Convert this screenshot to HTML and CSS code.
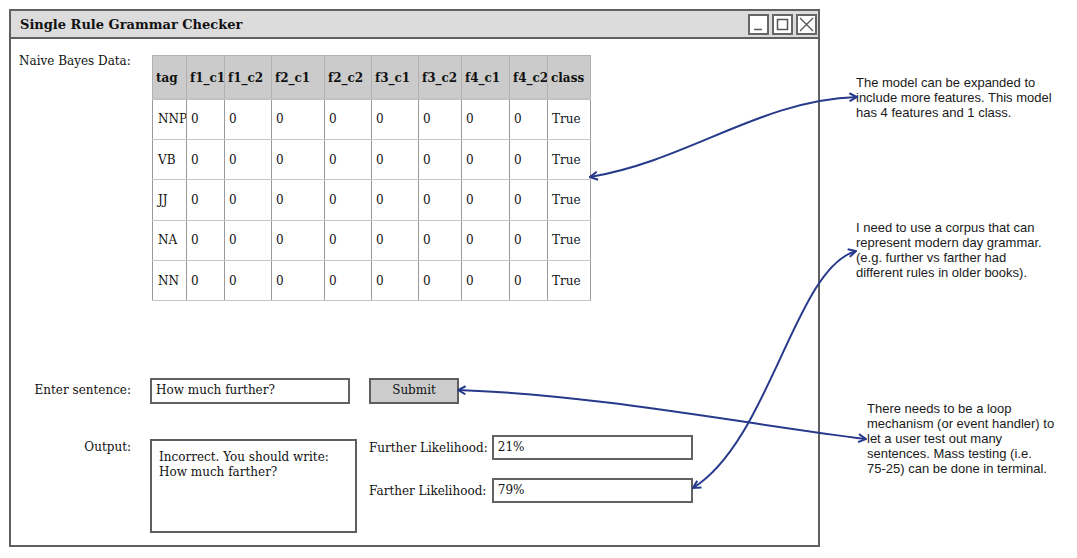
FILE: index.html
```html
<!DOCTYPE html>
<html>
<head>
<meta charset="utf-8">
<link rel="stylesheet" href="styles.css">
</head>
<body>
<div class="page">
  <div class="window">
    <div class="titlebar">
      <span class="title">Single Rule Grammar Checker</span>
      <div class="winbtns">
        <span class="winbtn"><svg width="17" height="17" viewBox="0 0 17 17"><path d="M4,13.5 H12" stroke="#555" stroke-width="1.5"/></svg></span>
        <span class="winbtn"><svg width="17" height="17" viewBox="0 0 17 17"><rect x="3.5" y="3.5" width="10" height="10" fill="none" stroke="#555" stroke-width="1.5"/></svg></span>
        <span class="winbtn"><svg width="17" height="17" viewBox="0 0 17 17"><path d="M2,2 L15,15 M15,2 L2,15" stroke="#555" stroke-width="1.3"/></svg></span>
      </div>
    </div>
    <div class="winbody">
      <div class="datarow">
        <div class="datalabel">Naive Bayes Data:</div>
        <table class="grid">
          <colgroup>
            <col style="width:34px"><col style="width:38px"><col style="width:47px"><col style="width:53px"><col style="width:47px"><col style="width:47px"><col style="width:43px"><col style="width:48px"><col style="width:38px"><col style="width:43px">
          </colgroup>
          <thead>
            <tr><th>tag</th><th>f1_c1</th><th>f1_c2</th><th>f2_c1</th><th>f2_c2</th><th>f3_c1</th><th>f3_c2</th><th>f4_c1</th><th>f4_c2</th><th>class</th></tr>
          </thead>
          <tbody>
            <tr><td>NNP</td><td>0</td><td>0</td><td>0</td><td>0</td><td>0</td><td>0</td><td>0</td><td>0</td><td>True</td></tr>
            <tr><td>VB</td><td>0</td><td>0</td><td>0</td><td>0</td><td>0</td><td>0</td><td>0</td><td>0</td><td>True</td></tr>
            <tr><td>JJ</td><td>0</td><td>0</td><td>0</td><td>0</td><td>0</td><td>0</td><td>0</td><td>0</td><td>True</td></tr>
            <tr><td>NA</td><td>0</td><td>0</td><td>0</td><td>0</td><td>0</td><td>0</td><td>0</td><td>0</td><td>True</td></tr>
            <tr><td>NN</td><td>0</td><td>0</td><td>0</td><td>0</td><td>0</td><td>0</td><td>0</td><td>0</td><td>True</td></tr>
          </tbody>
        </table>
      </div>
      <div class="formrow inputrow">
        <div class="flabel">Enter sentence:</div>
        <div class="field wide">How much further?</div>
        <div class="button">Submit</div>
      </div>
      <div class="formrow outputrow">
        <div class="flabel outlabel">Output:</div>
        <div class="outbox">Incorrect. You should write:<br>How much farther?</div>
        <div class="likes">
          <span class="llabel">Further Likelihood:</span><div class="field lk">21%</div>
          <span class="llabel">Farther Likelihood:</span><div class="field lk">79%</div>
        </div>
      </div>
    </div>
  </div>
  <div class="notes">
    <p class="note n1">The model can be expanded to<br>include more features. This model<br>has 4 features and 1 class.</p>
    <p class="note n2">I need to use a corpus that can<br>represent modern day grammar.<br>(e.g. further vs farther had<br>different rules in older books).</p>
    <p class="note n3">There needs to be a loop<br>mechanism (or event handler) to<br>let a user test out many<br>sentences. Mass testing (i.e.<br>75-25) can be done in terminal.</p>
  </div>
  <svg class="arrows" width="1077" height="558" viewBox="0 0 1077 558">
    <defs>
      <marker id="ah" viewBox="0 0 10 10" refX="9" refY="5" markerWidth="10" markerHeight="10" markerUnits="userSpaceOnUse" orient="auto-start-reverse">
        <path d="M1.5,1 L9,5 L1.5,9" fill="none" stroke="#26398b" stroke-width="2"/>
      </marker>
    </defs>
    <path d="M590,177 C690,160 760,100 857,97" fill="none" stroke="#26398b" stroke-width="2" marker-start="url(#ah)" marker-end="url(#ah)"/>
    <path d="M693,488 C770,440 795,268 856,251" fill="none" stroke="#26398b" stroke-width="2" marker-start="url(#ah)" marker-end="url(#ah)"/>
    <path d="M458,390 C600,395 750,425 866,439" fill="none" stroke="#26398b" stroke-width="2" marker-start="url(#ah)" marker-end="url(#ah)"/>
  </svg>
</div>
</body>
</html>
```
FILE: styles.css
```css
html, body {
  margin: 0;
  padding: 0;
  background: #fff;
}
body {
  font-family: "DejaVu Serif", serif;
  font-size: 12px;
  color: #111;
}
.page {
  position: relative;
  width: 1077px;
  height: 558px;
  display: flex;
  align-items: flex-start;
}
.window {
  margin: 9px 0 0 9px;
  width: 811px;
  height: 538px;
  box-sizing: border-box;
  border: 2px solid #606060;
  display: flex;
  flex-direction: column;
}
.titlebar {
  height: 28px;
  box-sizing: border-box;
  background: #dcdcdc;
  border-bottom: 2px solid #606060;
  display: flex;
  align-items: center;
  padding: 0 1px 0 9px;
}
.title {
  font-weight: bold;
  font-size: 13px;
  color: #111;
}
.winbtns {
  margin-left: auto;
  display: flex;
  gap: 3px;
}
.winbtn {
  width: 21px;
  height: 21px;
  box-sizing: border-box;
  border: 2px solid #666;
  background: #fff;
  display: flex;
  align-items: center;
  justify-content: center;
}
.winbtn svg { display: block; }
.winbody {
  padding: 16px 0 0 8px;
}
.datarow {
  display: flex;
  align-items: flex-start;
}
.datalabel {
  width: 133px;
  line-height: 15px;
  margin-top: -1px;
}
.grid {
  border-collapse: collapse;
  table-layout: fixed;
  width: 438px;
  border: 1px solid #bdbdbd;
}
.grid th, .grid td {
  overflow: hidden;
  white-space: nowrap;
  text-align: left;
  padding: 0 0 0 4px;
  font-size: 12px;
}
.grid th {
  height: 39.5px;
  padding-left: 3px;
  padding-top: 2px;
  background: #cbcbcb;
  font-weight: bold;
  border: 1px solid #b0b0b0;
  border-bottom: 2px solid #c2c2c2;
}
.grid td {
  height: 39.4px;
  border-left: 1px solid #9a9a9a;
  border-right: 1px solid #9a9a9a;
  border-top: 1px solid #c6c6c6;
  border-bottom: 1px solid #c6c6c6;
  color: #111;
}
.grid td:first-child { padding-left: 5px; }
.formrow {
  display: flex;
}
.inputrow {
  margin-top: 76px;
  align-items: center;
}
.flabel {
  width: 112px;
  text-align: right;
  margin-right: 19px;
  line-height: 15px;
}
.field {
  box-sizing: border-box;
  border: 2px solid #626262;
  background: #fff;
  padding: 0 0 0 4px;
  display: flex;
  align-items: center;
}
.wide {
  width: 200px;
  height: 26px;
  padding-bottom: 2px;
  margin-top: 1px;
}
.button {
  margin-left: 19px;
  width: 90px;
  height: 26px;
  box-sizing: border-box;
  border: 2px solid #5e5e5e;
  background: #cccccc;
  display: flex;
  align-items: center;
  justify-content: center;
  padding-bottom: 2px;
}
.outputrow {
  margin-top: 31px;
  align-items: flex-start;
}
.outlabel {
  margin-top: 5px;
}
.outbox {
  margin-top: 4px;
  width: 207px;
  height: 94px;
  box-sizing: border-box;
  border: 2px solid #5e5e5e;
  padding: 9px 0 0 7px;
  line-height: 15px;
}
.likes {
  margin-left: 12px;
  display: grid;
  grid-template-columns: auto 201px;
  column-gap: 4px;
  row-gap: 18px;
  align-items: center;
}
.lk {
  height: 25px;
  padding-bottom: 1px;
}
.notes {
  margin-left: 36px;
  font-family: "Liberation Sans", Arial, sans-serif;
  font-size: 13px;
  line-height: 15px;
  color: #1a1a1a;
}
.note { margin: 0; white-space: nowrap; }
.n1 { margin-top: 75px; }
.n2 { margin-top: 100px; }
.n3 { margin-top: 121px; margin-left: 11px; }
.arrows {
  position: absolute;
  left: 0;
  top: 0;
  pointer-events: none;
}
```
